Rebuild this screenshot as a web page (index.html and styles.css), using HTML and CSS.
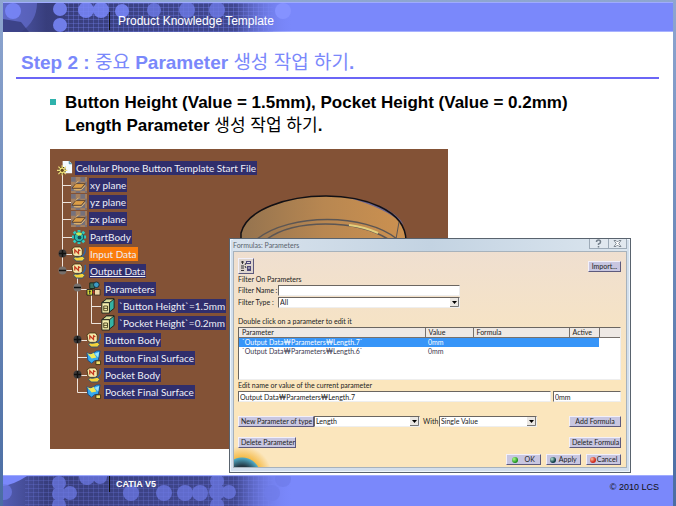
FILE: index.html
```html
<!DOCTYPE html>
<html lang="ko">
	<head>
		<meta charset="utf-8">
		<meta name="viewport" content="width=device-width, initial-scale=1">
		<title>Product Knowledge Template</title>
		<link rel="stylesheet" href="styles.css">
	</head>
	<body>
		<!-- shared icons -->
		<svg class="defs" width="0" height="0" aria-hidden="true">
			<defs>
				<linearGradient id="fade" x1="0" x2="1" y1="0" y2="0">
					<stop offset="0" stop-color="#343a78" stop-opacity=".55"/>
					<stop offset=".15" stop-color="#30356e" stop-opacity=".9"/>
					<stop offset=".8" stop-color="#363c7c" stop-opacity=".85"/>
					<stop offset="1" stop-color="#7a88fb" stop-opacity="0"/>
				</linearGradient>
				<pattern id="mesh" width="5" height="4" patternUnits="userSpaceOnUse">
					<path d="M0 .5H5M.5 0V4" stroke="#7a88fb" stroke-opacity=".3" fill="none"/>
				</pattern>
				<pattern id="check" width="10" height="10" patternUnits="userSpaceOnUse">
					<path d="M0 0H10V10H0Z" fill="#a5805f"/>
					<path d="M0 0H5V5H0ZM5 5H10V10H5Z" fill="#75717c"/>
				</pattern>
				<linearGradient id="metal" x1="0" x2="1" y1="0" y2="0">
					<stop offset="0" stop-color="#94734f"/>
					<stop offset=".5" stop-color="#b88751"/>
					<stop offset="1" stop-color="#cc9150"/>
				</linearGradient>
				<symbol id="i-root" viewBox="0 0 17 17">
					<path d="M6 1H13L16 4V14H6Z" fill="#f4faff"/>
					<path d="M13 1V4H16" fill="#9cc5d8" stroke="#4d8ca4"/>
					<circle cx="5.500" cy="11" r="3.500" fill="#f0df72" stroke="#3c3416"/>
					<path d="M5.500 5.500V16.500M0 11H11M1.500 7L9.500 15M9.500 7L1.500 15" stroke="#efdf7a" stroke-width="1.300"/>
					<circle cx="5.500" cy="11" r="1.700" fill="#5b4320"/>
				</symbol>
				<symbol id="i-plane" viewBox="0 0 17 17">
					<path d="M0 0H17V17H0Z" fill="url(#check)"/>
					<path d="M1 12L5 7H15L11 12Z" fill="#dc9e46" stroke="#5e4634"/>
					<path d="M3 13.500H11L15 9M5 7L8 4" stroke="#ecc173" fill="none"/>
				</symbol>
				<symbol id="i-gear" viewBox="0 0 17 17">
					<path d="M8.500 1V16M1 8.500H16M3 3L14 14M14 3L3 14" stroke="#2ecbc2" stroke-width="3"/>
					<circle cx="8.500" cy="8.500" r="5" fill="#29b9ad" stroke="#12484e"/>
					<path d="M5 5Q8 2 12 5L9 8Z" fill="#cbe95a"/>
					<circle cx="9" cy="9" r="2" fill="#174b57"/>
				</symbol>
				<symbol id="i-set" viewBox="0 0 17 17">
					<path d="M1 3L4 1H10L12 4V9L10 11H4L2 9Z" fill="#f8ebaa" stroke="#4c3b1c"/>
					<path d="M4 8V4L8 8V4L10 5" stroke="#c43b22" stroke-width="1.300" fill="none"/>
					<path d="M15 2Q16 8 12 11" stroke="#2b63a8" stroke-width="1.500" fill="none"/>
					<path d="M3 14Q2 11 7 12L12 11L15 13L12 16H6Z" fill="#f5d33a" stroke="#2e5476"/>
				</symbol>
				<symbol id="i-params" viewBox="0 0 17 17">
					<path d="M4 2H9V8H4Z" fill="#3b7562" stroke="#16261c"/>
					<circle cx="11" cy="4" r="3" fill="#3c9bc6" stroke="#18303a"/>
					<path d="M1 9H7V15H1Z" fill="#d7d83c" stroke="#222"/>
					<path d="M3 11H5M4 10V14" stroke="#222"/>
					<path d="M9 9H15V15H9Z" fill="#eed7a7" stroke="#3c2a1a"/>
					<path d="M7 12H9" stroke="#c5332a" stroke-width="2"/>
				</symbol>
				<symbol id="i-length" viewBox="0 0 17 17">
					<path d="M2 5L7 1H15V11L10 15V5Z" fill="#35b2a4" stroke="#1d231e"/>
					<path d="M2 5L7 1H15L10 5Z" fill="#d9dc9a" stroke="#1d231e"/>
					<path d="M2 5H10V16H2Z" fill="#f6efae" stroke="#1d231e"/>
					<path d="M4 8.500H8V13.500H4ZM4 11H8" fill="none" stroke="#4a4320"/>
				</symbol>
				<symbol id="i-surface" viewBox="0 0 17 17">
					<path d="M1 3Q5 6 8 3T15 1L13 11Q9 10 6 14L2 11Z" fill="#36a9ee" stroke="#15508e"/>
					<path d="M1 3Q5 6 8 3L11 8L6 9Z" fill="#f3e954"/>
					<path d="M9 4L14 2L13 8Z" fill="#9be4fb"/>
					<path d="M10.500 11.500H15.500V15.500H10.500Z" fill="#f2df6c" stroke="#3b3014"/>
				</symbol>
			</defs>
		</svg>

		<div class="slide">
			<header class="band">
				<svg class="band-art" viewBox="0 0 290 29" width="290" height="29" aria-hidden="true">
					<path d="M0 0H290V29H0Z" fill="url(#fade)"/>
					<path d="M62 0H270V29H62Z" fill="url(#mesh)"/>
					<path d="M18 29Q34 18 34 0H0V29Z" fill="#6772d6" opacity=".6"/>
					<path d="M0 16L18 19L26 29H0Z" fill="#353b7b" opacity=".8"/>
					<g fill="#7a88fb" opacity=".85">
						<circle cx="10" cy="8" r="8"/><circle cx="57" cy="6" r="7"/><circle cx="57" cy="22" r="7"/>
						<circle cx="83" cy="7" r="8"/><circle cx="98" cy="7" r="8"/><circle cx="119" cy="8" r="7"/>
					</g>
					<g fill="#6d7ae6" opacity=".8">
						<circle cx="151" cy="7" r="7"/><circle cx="184" cy="7" r="8"/><circle cx="214" cy="7" r="8"/>
					</g>
					<circle cx="280" cy="8" r="8" fill="#8592ff"/>
				</svg>
				<p class="band-title">Product Knowledge Template</p>
			</header>

			<main>
				<h1>Step 2 : <span class="ko">중요</span> Parameter <span class="ko">생성 작업 하기</span>.</h1>
				<ul class="points">
					<li>Button Height (Value = 1.5mm), Pocket Height (Value = 0.2mm)<br>Length Parameter <span class="ko">생성 작업 하기</span>.</li>
				</ul>

				<div class="desktop">
					<div class="viewer">
						<svg class="part" viewBox="0 0 398 300" width="398" height="300" aria-hidden="true">
							<path d="M191 92V84C197 60 238 47 276 47C312 47 356 60 356 92Z" fill="url(#metal)"/>
							<path d="M295 48Q342 55 354 76Q335 58 295 48Z" fill="#6a6593"/>
							<path d="M191 92V84C197 60 238 47 276 47C312 47 356 60 356 92" fill="none" stroke="#121014" stroke-width="1.500"/>
							<path d="M207 90C240 64 315 64 347 90M217 90C245 70 305 70 338 90" fill="none" stroke="#5c5654" stroke-width="1.500"/>
							<path d="M299 76Q315 78 328 84" stroke="#e3d07e" stroke-width="2" fill="none"/>
							<path d="M349 73L346 90" stroke="#5c5654"/>
						</svg>
						<svg class="links" viewBox="0 0 80 300" width="80" height="300" aria-hidden="true">
							<g stroke="#eee4dc" fill="none">
								<path d="M12.500 26V121M12.500 36.500H22M12.500 53.500H22M12.500 70.500H22M12.500 88.500H22M12.500 105.500H22M12.500 121.500H22"/>
								<path d="M27.500 128V243.500H37M27.500 140.500H37M27.500 191.500H37M27.500 208.500H37M27.500 226.500H37"/>
								<path d="M41.500 146V174.500H51M41.500 157.500H51"/>
							</g>
							<g fill="#3c3a3a">
								<circle cx="12.500" cy="104.500" r="4"/><circle cx="27.500" cy="190.500" r="4"/><circle cx="27.500" cy="225.500" r="4"/>
							</g>
							<g fill="#77706c">
								<circle cx="12.500" cy="121.500" r="4"/><circle cx="27.500" cy="138.500" r="4"/>
							</g>
							<path d="M9 104.500H16M12.500 101V108M24 190.500H31M27.500 187V194M24 225.500H31M27.500 222V229M9 121.500H16M24 138.500H31" stroke="#111" stroke-width="1.500"/>
						</svg>
						<ul class="tree">
							<li class="root"><svg><use href="#i-root"/></svg><span>Cellular Phone Button Template Start File</span></li>
							<li class="l1"><svg><use href="#i-plane"/></svg><span>xy plane</span></li>
							<li class="l1"><svg><use href="#i-plane"/></svg><span>yz plane</span></li>
							<li class="l1"><svg><use href="#i-plane"/></svg><span>zx plane</span></li>
							<li class="l1"><svg><use href="#i-gear"/></svg><span>PartBody</span></li>
							<li class="l1"><svg><use href="#i-set"/></svg><span class="selected">Input Data</span></li>
							<li class="l1"><svg><use href="#i-set"/></svg><span class="active">Output Data</span></li>
							<li class="l2"><svg><use href="#i-params"/></svg><span>Parameters</span></li>
							<li class="l3"><svg><use href="#i-length"/></svg><span>`Button Height`=1.5mm</span></li>
							<li class="l3"><svg><use href="#i-length"/></svg><span>`Pocket Height`=0.2mm</span></li>
							<li class="l2"><svg><use href="#i-set"/></svg><span>Button Body</span></li>
							<li class="l2"><svg><use href="#i-surface"/></svg><span>Button Final Surface</span></li>
							<li class="l2"><svg><use href="#i-set"/></svg><span>Pocket Body</span></li>
							<li class="l2"><svg><use href="#i-surface"/></svg><span>Pocket Final Surface</span></li>
						</ul>
					</div>

					<section class="dialog" aria-label="Formulas: Parameters">
						<div class="dialog-bar">
							<span>Formulas: Parameters</span>
							<div class="dialog-tools">
								<button type="button" aria-label="Help"><svg viewBox="0 0 9 9" width="9" height="9"><path d="M2.500 3Q2.500 1 4.500 1T6.500 3Q6.500 4.500 4.500 5V6M4.500 7V8.500" fill="none" stroke="#75808c" stroke-width="1.500"/></svg></button>
								<button type="button" aria-label="Close"><svg viewBox="0 0 9 9" width="9" height="9"><path d="M1 1.500H3L4.500 3L6 1.500H8L5.700 4.500L8 7.500H6L4.500 6L3 7.500H1L3.300 4.500Z" fill="#fff" stroke="#66717d" stroke-width=".8"/></svg></button>
							</div>
						</div>
						<form class="client">
							<div class="row top">
								<button type="button" class="btn square" aria-label="Filter">
									<svg viewBox="0 0 12 12" width="12" height="12"><path d="M1 2H4M2.500 1V4M1 6H4M1 8H4M1 10.500H4M5 5L6 3M5 6L6 8" stroke="#333" fill="none"/><path d="M6 1H11V4H6ZM7 6H11V11H7Z" fill="#504a7a"/><path d="M7 2.500H10M8 8H10" stroke="#ddd"/></svg>
								</button>
								<button type="button" class="btn import">Import...</button>
							</div>
							<p class="label">Filter On Parameters</p>
							<div class="row filter">
								<label for="fName">Filter Name :</label>
								<input id="fName" type="text">
							</div>
							<div class="row filter">
								<label for="fType">Filter Type :</label>
								<select id="fType"><option>All</option></select>
							</div>
							<p class="label list-label">Double click on a parameter to edit it</p>
							<div class="list">
								<table>
									<thead>
										<tr><th class="c-name">Parameter</th><th class="c-value">Value</th><th class="c-formula">Formula</th><th class="c-active">Active</th><th></th></tr>
									</thead>
									<tbody>
										<tr class="current"><td>`Output Data₩Parameters₩Length.7`</td><td>0mm</td><td></td><td></td><td class="rest"></td></tr>
										<tr><td>`Output Data₩Parameters₩Length.6`</td><td>0mm</td><td></td><td></td><td></td></tr>
									</tbody>
								</table>
							</div>
							<label class="label" for="pName">Edit name or value of the current parameter</label>
							<div class="row edit">
								<input id="pName" type="text" value="Output Data₩Parameters₩Length.7">
								<input class="p-value" type="text" value="0mm" aria-label="Value">
							</div>
							<div class="row create">
								<button type="button" class="btn new">New Parameter of type</button>
								<select class="s-type" aria-label="Type"><option>Length</option></select>
								<label class="with" for="pWith">With</label>
								<select id="pWith" class="s-with"><option>Single Value</option></select>
								<span class="spacer"></span>
								<button type="button" class="btn side">Add Formula</button>
							</div>
							<div class="row remove">
								<button type="button" class="btn delete">Delete Parameter</button>
								<span class="spacer"></span>
								<button type="button" class="btn side">Delete Formula</button>
							</div>
							<div class="row actions">
								<button type="button" class="btn"><i class="dot green"></i>OK</button>
								<button type="button" class="btn"><i class="dot teal"></i>Apply</button>
								<button type="button" class="btn"><i class="dot red"></i>Cancel</button>
							</div>
						</form>
					</section>
				</div>
			</main>

			<footer class="band">
				<svg class="band-art" viewBox="0 0 290 31" width="290" height="31" aria-hidden="true">
					<path d="M0 0H290V31H0Z" fill="url(#fade)"/>
					<path d="M22 0H270V31H22Z" fill="url(#mesh)" opacity=".7"/>
					<path d="M0 0H24Q12 8 0 10Z" fill="#7a88fb"/>
					<g fill="#6f7ce9" opacity=".7">
						<circle cx="1" cy="16" r="8"/><circle cx="56" cy="7" r="7"/><circle cx="56" cy="18" r="7"/><circle cx="56" cy="29" r="7"/><circle cx="67" cy="17" r="7"/>
						<circle cx="84" cy="1" r="8"/><circle cx="97" cy="1" r="7"/><circle cx="128" cy="17" r="8"/><circle cx="161" cy="17" r="8"/>
						<circle cx="182" cy="17" r="8"/><circle cx="197" cy="17" r="8"/><circle cx="214" cy="5" r="7"/><circle cx="214" cy="16" r="8"/><circle cx="214" cy="29" r="7"/>
						<circle cx="226" cy="16" r="7"/><circle cx="269" cy="17" r="8"/><circle cx="280" cy="3" r="8"/>
					</g>
				</svg>
				<p class="product">CATIA V5</p>
				<p class="copy">© 2010 LCS</p>
			</footer>
		</div>
	</body>
</html>
```
FILE: styles.css
```css
*{ box-sizing: border-box; }
html,body{ margin: 0; }
body{ min-height: 100vh; padding: 2px 3px 0; display: flex; background: linear-gradient(#8ea6d0, #4a6da3); font-family: "Liberation Sans", "Noto Sans CJK KR", sans-serif; }
h1,p,ul,form{ margin: 0; padding: 0; }
ul{ list-style: none; }
svg{ display: block; flex: none; }
.defs{ position: absolute; }
.slide{ flex: 1; display: flex; flex-direction: column; min-width: 0; background: #fff; }
.ko{ font-family: "Noto Sans CJK KR", sans-serif; font-weight: 400; }

/* header and footer bands */
.band{ position: relative; background: #7a88fb; border-top: 1px solid #9fabff; }
.band-art{ position: absolute; left: 0; top: 0; }
header.band{ height: 30px; border-bottom: 1px solid #a8b2ff; }
footer.band{ height: 31px; display: flex; justify-content: space-between; padding-right: 14px; }
.band-title,.product,.copy{ position: relative; }
.band-title{ margin: 9px 0 0 106px; padding-left: 8px; border-left: 1px solid #111; font-size: 12px; line-height: 18px; color: #fff; }
.product{ align-self: flex-start; margin-left: 106px; padding-left: 6px; border-left: 1px solid #111; font-size: 9px; font-weight: bold; line-height: 16px; color: #fff; }
.copy{ font-size: 9px; line-height: 22px; color: #111; }

main{ flex: 1; padding: 0 14px 0 13px; }
h1{ padding: 14px 5px 0; height: 47px; border-bottom: 2px solid #6b66f6; font-size: 19px; line-height: 30px; color: #7a88fb; }
.points{ padding: 13px 0 0 34px; font-size: 17px; font-weight: bold; line-height: 21px; }
.points li{ position: relative; padding-left: 15px; }
.points li:before{ content: ""; position: absolute; left: 0; top: 7px; width: 6px; height: 6px; background: #2fb2ac; }

/* tree viewer */
.desktop{ position: relative; margin: 13px 0 0 34px; max-width: 581px; }
.viewer{ position: relative; width: 398px; height: 300px; padding: 10px 0 0 7px; background: #835236; }
.part,.links{ position: absolute; left: 0; top: 0; }
.tree{ position: relative; display: grid; grid-auto-rows: 1fr; height: 242px; font-family: Lato, "Noto Sans", sans-serif; font-size: 10px; line-height: 14px; color: #eeeef6; }
.tree li{ display: flex; align-items: center; gap: 2px; white-space: nowrap; }
.tree svg{ width: 16px; height: 16px; }
.tree span{ padding: 0 1px; background: #302e6c; }
.tree .selected{ background: #fb7d0c; }
.tree .active{ text-decoration: underline; }
.l1{ padding-left: 14px; }
.l2{ padding-left: 29px; }
.l3{ padding-left: 43px; }

/* formula dialog */
.dialog{ position: absolute; left: 179px; top: 89px; width: 402px; padding: 0 3px 4px; border: 1px solid #59636e; background: #d3dfec; font-family: Lato, "Noto Sans CJK KR", sans-serif; font-size: 7px; line-height: 10px; color: #222; box-shadow: inset 0 0 0 1px #eef5fb; }
.dialog button,.dialog input,.dialog select{ font: inherit; color: inherit; margin: 0; border-radius: 0; }
.dialog-bar{ display: flex; justify-content: space-between; height: 12px; line-height: 12px; color: #59636d; background: linear-gradient(90deg, #d9e3ed, #c3d3e2 50%, #dce6ef); }
.dialog-tools{ display: flex; height: 10px; border: 1px solid #9eabb8; border-top: 0; }
.dialog-tools button{ width: 18px; padding: 0 4px; border: 0; background: #e1e8ef; }
.dialog-tools button + button{ border-left: 1px solid #9eabb8; }
.client{ height: 217px; padding: 6px 5px 3px 4px; border: 1px solid #a7b2bc; background: radial-gradient(circle at 8px 224px, #233642 10px, #4fa9c4 18px, #f5bd4e 19px, transparent 30px), linear-gradient(#efdfd0, #fbe6bd 60%); }
.row{ display: flex; }
.spacer{ flex: 1; }
.label{ display: block; height: 11px; line-height: 11px; }
.dialog .btn{ height: 11px; padding: 0 2px; border: 1px solid; border-color: #f2f0fa #5d5a7c #5d5a7c #f2f0fa; background: #c8c6e0; line-height: 9px; white-space: nowrap; }
.top{ justify-content: space-between; height: 16px; align-items: center; }
.dialog .square{ width: 16px; height: 16px; padding: 1px; background: #ded5cf; }
.import{ width: 33px; }
.client input,.client select{ height: 11px; min-width: 0; padding: 0 1px; border: 1px solid; border-color: #6b6661 #eee #eee #6b6661; background: #fff; line-height: 9px; }
.client select{ appearance: none; background: #fff url("data:image/svg+xml,%3Csvg xmlns='http://www.w3.org/2000/svg' width='9' height='9'%3E%3Cpath d='M0 0H9V9H0Z' fill='%23ebe8e4'/%3E%3Cpath d='M0 8.500H8.500V0' fill='none' stroke='%23777'/%3E%3Cpath d='M2 3H7L4.500 6Z'/%3E%3C/svg%3E") no-repeat right center; }
.filter + .filter{ margin-top: 1px; }
.filter label{ width: 40px; line-height: 11px; white-space: nowrap; }
.filter input,.filter select{ width: 182px; }
.list-label{ margin-top: 8px; }
.list{ height: 53px; border: 1px solid; border-color: #6b6661 #eee #eee #6b6661; background: #fff; }
.list table{ width: 100%; table-layout: fixed; border-collapse: collapse; }
.list th,.list td{ height: 9px; padding: 0 3px; line-height: 9px; text-align: left; font-weight: normal; white-space: nowrap; }
.list th{ border-right: 1px solid #77716c; border-bottom: 1px solid #77716c; background: #eee9e5; }
.list th:last-child{ border-right: 0; }
.c-name{ width: 186px; }
.c-value{ width: 48px; }
.c-formula{ width: 96px; }
.c-active{ width: 30px; }
.list td{ color: #3a3950; }
.list .current td{ background: #3795f8; color: #fff; }
.list .current .rest{ background: #fff; }
.edit{ gap: 2px; }
.edit input{ flex: 1; }
.edit .p-value{ flex: none; width: 68px; }
.create{ margin-top: 14px; }
.new{ width: 76px; }
.s-type{ width: 106px; }
.with{ width: 19px; padding-left: 3px; }
.s-with{ width: 98px; }
.side{ width: 52px; }
.remove{ margin-top: 10px; }
.delete{ width: 58px; }
.actions{ justify-content: flex-end; gap: 5px; margin-top: 6px; }
.actions .btn{ display: flex; align-items: center; justify-content: space-around; width: 35px; }
.dot{ width: 6px; height: 6px; border-radius: 50%; }
.green{ background: radial-gradient(circle at 2px 2px, #a9ff8a, #1a8d1a 70%); }
.teal{ background: radial-gradient(circle at 2px 2px, #b7e6d6, #123f48 60%); }
.red{ background: radial-gradient(circle at 2px 2px, #ffc0a0, #cf2a1c 60%); }
```
